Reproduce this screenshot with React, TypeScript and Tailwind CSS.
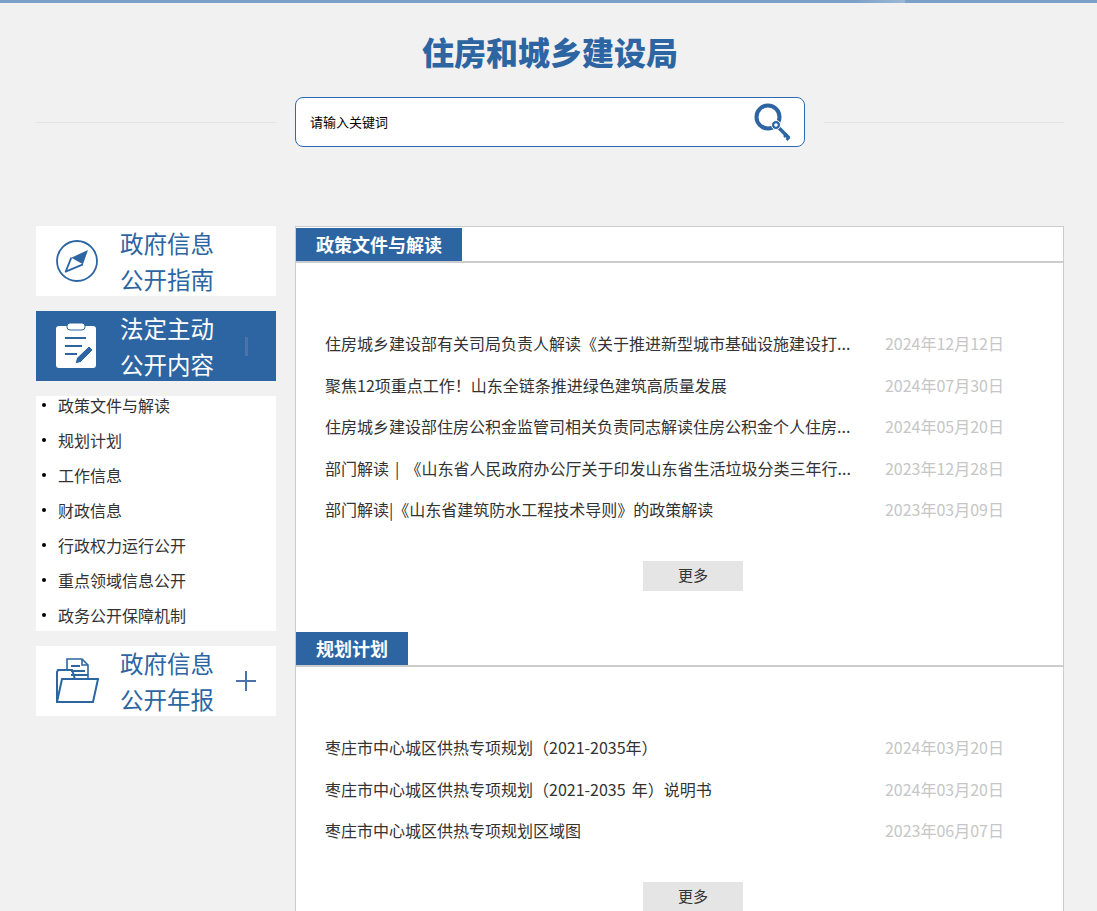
const sections = [
  {
    title: "政策文件与解读",
    tabWidth: "w-[166px]",
    rows: [
      ["住房城乡建设部有关司局负责人解读《关于推进新型城市基础设施建设打...", "2024年12月12日"],
      ["聚焦12项重点工作！山东全链条推进绿色建筑高质量发展", "2024年07月30日"],
      ["住房城乡建设部住房公积金监管司相关负责同志解读住房公积金个人住房...", "2024年05月20日"],
      ["部门解读 | 《山东省人民政府办公厅关于印发山东省生活垃圾分类三年行...", "2023年12月28日"],
      ["部门解读|《山东省建筑防水工程技术导则》的政策解读", "2023年03月09日"],
    ],
  },
  {
    title: "规划计划",
    tabWidth: "w-[112px]",
    rows: [
      ["枣庄市中心城区供热专项规划（2021-2035年）", "2024年03月20日"],
      ["枣庄市中心城区供热专项规划（2021-2035 年）说明书", "2024年03月20日"],
      ["枣庄市中心城区供热专项规划区域图", "2023年06月07日"],
    ],
  },
];

const listItems = ["政策文件与解读", "规划计划", "工作信息", "财政信息", "行政权力运行公开", "重点领域信息公开", "政务公开保障机制"];

function CompassIcon() {
  return (
    <svg width="42" height="42" viewBox="0 0 42 42" fill="none">
      <circle cx="21" cy="21" r="20" stroke="#2d65a3" strokeWidth="1.8" />
      <path d="M32 10 15.3 17.7 27 24.3Z" fill="#2d65a3" />
      <path d="M15.3 17.7 9.7 31.7 27 24.3" stroke="#2d65a3" strokeWidth="1.8" strokeLinejoin="round" />
    </svg>
  );
}

function ClipboardIcon() {
  return (
    <svg width="42" height="46" viewBox="0 0 42 46" fill="none">
      <rect x="0" y="3" width="40" height="42" rx="3" fill="#fff" />
      <rect x="11" y="0" width="18" height="7" rx="3" fill="#fff" stroke="#2d65a3" strokeWidth="1" />
      <path d="M9 15h21M9 23h17M9 31h12" stroke="#2d65a3" strokeWidth="2" />
      <path d="M19 41l1.500-6L33 23l4 4-12.500 12.500z" fill="#2d65a3" stroke="#fff" strokeWidth="1" />
    </svg>
  );
}

function FolderIcon() {
  return (
    <svg width="44" height="46" viewBox="0 0 44 46" fill="none" stroke="#2d65a3" strokeWidth="2">
      <path d="M11 12V1h15l6 6v14" strokeWidth="1.600" />
      <path d="M26 1v6h6" strokeWidth="1.600" />
      <path d="M15 8h9M15 13h14M15 17h17" strokeWidth="1.800" />
      <path d="M1 44V14l1-2h14l3 9h23l-5 23z" />
      <path d="M1 44l5-23h13" />
    </svg>
  );
}

function KeyIcon() {
  return (
    <svg width="40" height="40" viewBox="0 0 40 40" fill="none">
      <circle cx="15" cy="15" r="11.500" stroke="#2d65a3" strokeWidth="4" />
      <path d="M24 24 36 36" stroke="#2d65a3" strokeWidth="3.500" />
      <path d="M31 35l3-3M33.500 38l3-3" stroke="#2d65a3" strokeWidth="2.500" />
      <circle cx="23" cy="23" r="4.500" fill="#2d65a3" stroke="#fff" strokeWidth="1" />
      <circle cx="23" cy="23" r="1.800" fill="#fff" />
    </svg>
  );
}

function SideCard({ icon, lines, active, mark }: { icon: React.ReactNode; lines: string[]; active?: boolean; mark?: React.ReactNode }) {
  return (
    <div className={`flex h-[70px] items-center pr-5 pl-5 ${active ? "bg-[#2d65a3] text-white" : "bg-white text-[#2d65a3]"}`}>
      <div className="flex w-[65px] shrink-0 items-center">{icon}</div>
      <div className="-ml-px w-[115px] text-[23.500px] leading-[36px]">
        {lines.map((l) => (
          <div key={l}>{l}</div>
        ))}
      </div>
      <div className="ml-auto flex w-5 justify-center">{mark}</div>
    </div>
  );
}

export default function App() {
  return (
    <div className="h-[911px] overflow-hidden bg-[#f1f1f1] font-['Noto_Sans_CJK_SC','Liberation_Sans',sans-serif]">
      <div className="h-[3px] bg-[linear-gradient(90deg,#7ca1c9_0,#7ca1c9_78%,#9db8d6_82.4%,#7ca1c9_82.6%)]" />
      <div className="pr-[33px] pl-9">
        <h1 className="mt-[25px] text-center text-[32px] leading-[46px] font-black text-[#2d65a3]">住房和城乡建设局</h1>

        <div className="mt-[23px] flex items-center gap-[19px]">
          <div className="h-px w-[240px] bg-[#e3e3e3]" />
          <div className="flex h-[50px] w-[510px] items-center rounded-lg border border-[#2a6ab5] bg-white pr-[11px] pl-[14px]">
            <input
              className="min-w-0 flex-1 bg-transparent text-[13px] text-black outline-none placeholder:text-black"
              placeholder="请输入关键词"
            />
            <KeyIcon />
          </div>
          <div className="h-px w-[240px] bg-[#e3e3e3]" />
        </div>

        <div className="mt-[79px] flex items-start gap-[19px]">
          <aside className="flex w-[240px] shrink-0 flex-col gap-[15px]">
            <SideCard icon={<CompassIcon />} lines={["政府信息", "公开指南"]} />
            <SideCard
              active
              icon={<ClipboardIcon />}
              lines={["法定主动", "公开内容"]}
              mark={<span className="mt-px h-[19px] w-[3px] bg-[#4c72a8]" />}
            />
            <ul className="flex flex-col gap-[15px] bg-white pb-[5px] pl-1.5 text-base text-[#333]">
              {listItems.map((item) => (
                <li key={item} className="flex h-5 items-center gap-3 pb-0.5 leading-[18px]">
                  <span className="h-1 w-1 rounded-full bg-black" />
                  {item}
                </li>
              ))}
            </ul>
            <SideCard
              icon={<FolderIcon />}
              lines={["政府信息", "公开年报"]}
              mark={
                <svg width="20" height="20" viewBox="0 0 20 20" stroke="#4c72a8" strokeWidth="2">
                  <path d="M0 10h20M10 0v20" />
                </svg>
              }
            />
          </aside>

          <main className="min-w-0 flex-1 border border-[#ccc] bg-white pt-px">
            {sections.map((s) => (
              <section key={s.title} className="mb-[41.500px]">
                <div className="border-b-2 border-[#ccc]">
                  <h2 className={`${s.tabWidth} bg-[#2d65a3] pl-5 text-lg leading-[33px] font-bold text-white`}>{s.title}</h2>
                </div>
                <ul className="pt-[59.500px] pr-[59px] pl-[29px]">
                  {s.rows.map(([text, date]) => (
                    <li key={text + date} className="flex h-[41.500px] items-center justify-between text-base text-[#333]">
                      <span className="[word-spacing:2.500px]">{text}</span>
                      <span className="text-[#c6c6c6]">{date}</span>
                    </li>
                  ))}
                </ul>
                <button className="mt-[30.500px] ml-[347px] block h-[30px] w-[100px] bg-[#e5e5e5] text-[15px] text-[#333]">更多</button>
              </section>
            ))}
          </main>
        </div>
      </div>
    </div>
  );
}
